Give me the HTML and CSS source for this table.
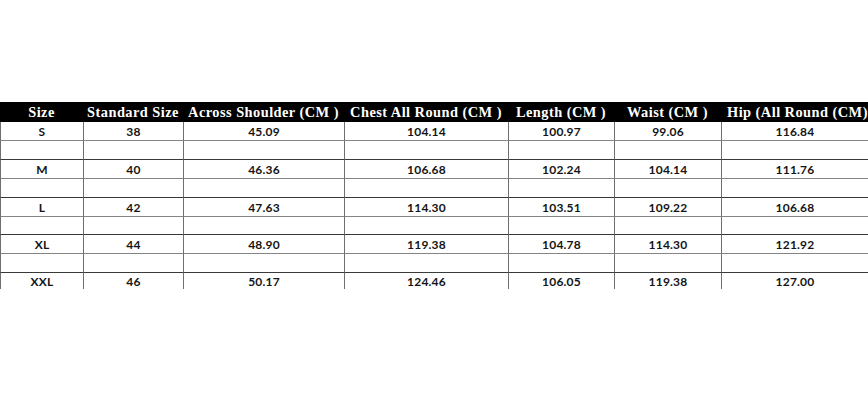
FILE: index.html
```html
<!DOCTYPE html>
<html>
<head>
<meta charset="utf-8">
<link rel="stylesheet" href="styles.css">
</head>
<body>
<div class="page">
  <div class="clip">
    <table class="sizes">
      <thead>
        <tr>
          <th class="c1">Size</th>
          <th class="c2">Standard Size</th>
          <th class="c3">Across Shoulder (CM )</th>
          <th class="c4">Chest All Round (CM )</th>
          <th class="c5">Length (CM )</th>
          <th class="c6">Waist (CM )</th>
          <th class="c7">Hip (All Round (CM)</th>
        </tr>
      </thead>
      <tbody>
        <tr class="data"><td>S</td><td>38</td><td>45.09</td><td>104.14</td><td>100.97</td><td>99.06</td><td>116.84</td></tr>
        <tr class="gap"><td></td><td></td><td></td><td></td><td></td><td></td><td></td></tr>
        <tr class="data"><td>M</td><td>40</td><td>46.36</td><td>106.68</td><td>102.24</td><td>104.14</td><td>111.76</td></tr>
        <tr class="gap"><td></td><td></td><td></td><td></td><td></td><td></td><td></td></tr>
        <tr class="data"><td>L</td><td>42</td><td>47.63</td><td>114.30</td><td>103.51</td><td>109.22</td><td>106.68</td></tr>
        <tr class="gap short"><td></td><td></td><td></td><td></td><td></td><td></td><td></td></tr>
        <tr class="data"><td>XL</td><td>44</td><td>48.90</td><td>119.38</td><td>104.78</td><td>114.30</td><td>121.92</td></tr>
        <tr class="gap"><td></td><td></td><td></td><td></td><td></td><td></td><td></td></tr>
        <tr class="data last"><td>XXL</td><td>46</td><td>50.17</td><td>124.46</td><td>106.05</td><td>119.38</td><td>127.00</td></tr>
      </tbody>
    </table>
  </div>
</div>
</body>
</html>
```

FILE: styles.css
```css
* { box-sizing: border-box; }
html, body { margin: 0; padding: 0; background: #ffffff; }
.page { padding-top: 102px; width: 868px; }
.clip { height: 188px; overflow: hidden; }
.sizes {
  table-layout: fixed;
  border-collapse: separate;
  border-spacing: 0;
  width: 868px;
}
.sizes th {
  background: #000000;
  color: #ffffff;
  font-family: "Liberation Serif", "Times New Roman", serif;
  font-weight: bold;
  font-size: 14.4px;
  letter-spacing: 0.45px;
  height: 20px;
  line-height: 19px;
  padding: 1px 0 0 0;
  text-align: center;
  white-space: nowrap;
  overflow: visible;
}
.sizes .c1 { width: 83px; }
.sizes .c2 { width: 100px; }
.sizes .c3 { width: 161px; }
.sizes .c4 { width: 164px; }
.sizes .c5 { width: 106px; }
.sizes .c6 { width: 107px; }
.sizes .c7 { width: 147px; text-align: left; padding-left: 6px; }
.sizes td {
  height: 19px;
  padding: 0;
  padding-top: 1px;
  text-align: center;
  font-family: Lato, "Open Sans", sans-serif;
  font-weight: bold;
  font-size: 12px;
  letter-spacing: 0.2px;
  color: #151515;
  border-left: 1px solid #6e6e6e;
  border-bottom: 1px solid #858585;
  white-space: nowrap;
}
.sizes .gap td { border-bottom-color: #3a3a3a; }
.sizes .short td { height: 18px; }
.sizes .last td { border-bottom: none; height: 16px; }
```
